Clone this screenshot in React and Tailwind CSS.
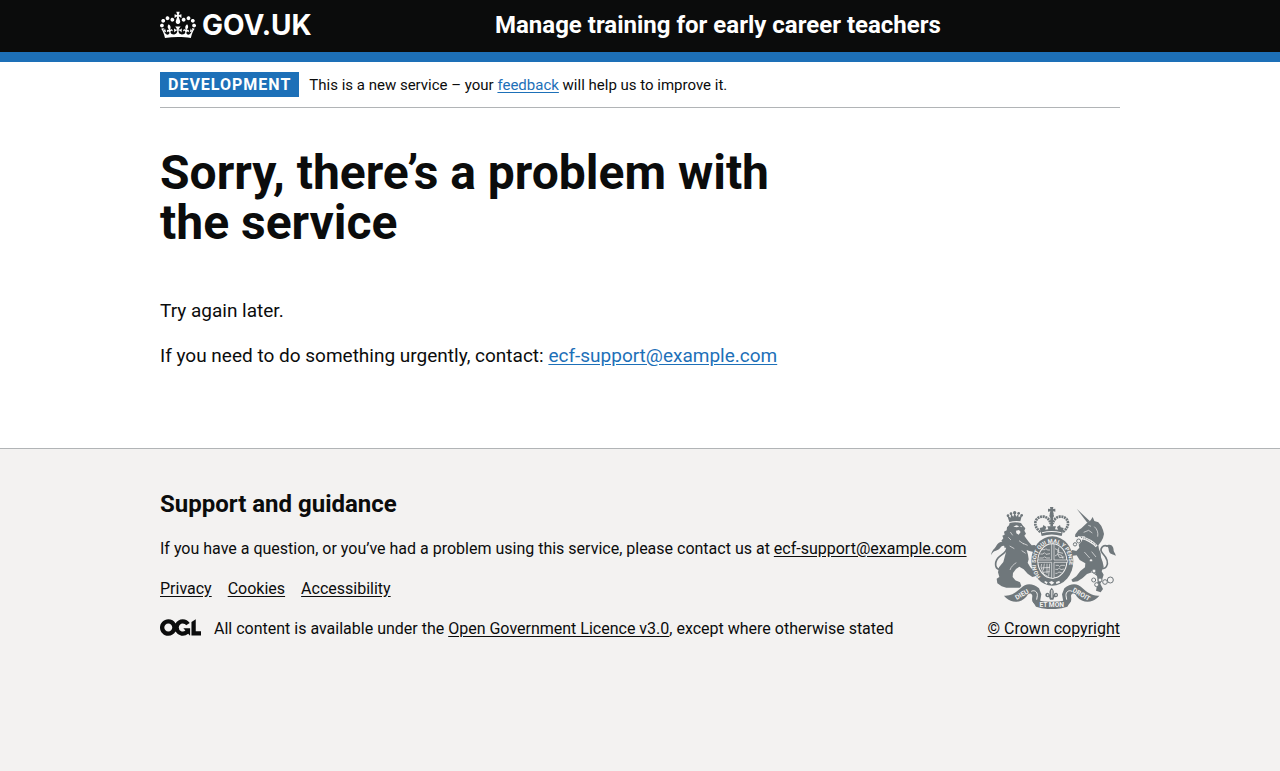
function Crown() {
  return (
    <svg aria-hidden="true" viewBox="0 0 132 97" className="h-[30px] w-9 shrink-0 fill-current">
      <path fillRule="evenodd" d="M25 30.2c3.5 1.5 7.7-.2 9.1-3.7 1.5-3.6-.2-7.8-3.9-9.2-3.6-1.4-7.6.3-9.1 3.9-1.4 3.5.3 7.5 3.9 9zM9 39.5c3.6 1.5 7.8-.2 9.2-3.7 1.5-3.6-.2-7.8-3.9-9.1-3.6-1.5-7.6.2-9.1 3.8-1.4 3.5.3 7.5 3.8 9zM4.4 57.2c3.5 1.5 7.7-.2 9.1-3.8 1.5-3.6-.2-7.7-3.9-9.1-3.5-1.5-7.6.3-9.1 3.8-1.4 3.5.3 7.6 3.9 9.1zm38.3-21.4c3.5 1.5 7.7-.2 9.1-3.8 1.5-3.6-.2-7.7-3.9-9.1-3.6-1.5-7.6.3-9.1 3.8-1.3 3.6.4 7.7 3.9 9.1zm64.4-5.6c-3.6 1.5-7.8-.2-9.1-3.7-1.5-3.6.2-7.8 3.8-9.2 3.6-1.4 7.7.3 9.2 3.9 1.3 3.5-.4 7.5-3.9 9zm15.9 9.3c-3.6 1.5-7.7-.2-9.1-3.7-1.5-3.6.2-7.8 3.7-9.1 3.6-1.5 7.7.2 9.2 3.8 1.5 3.5-.3 7.5-3.8 9zm4.7 17.7c-3.6 1.5-7.8-.2-9.2-3.8-1.5-3.6.2-7.7 3.9-9.1 3.6-1.5 7.7.3 9.2 3.8 1.3 3.5-.4 7.6-3.9 9.1zM89.3 35.8c-3.6 1.5-7.8-.2-9.2-3.8-1.4-3.6.2-7.7 3.9-9.1 3.6-1.5 7.7.3 9.2 3.8 1.4 3.6-.3 7.7-3.9 9.1zM69.7 17.7l8.9 4.7V9.3l-8.9 2.8c-.2-.3-.5-.6-.9-.9L72.4 0H59.6l3.5 11.2c-.3.3-.6.5-.9.9l-8.8-2.8v13.1l8.8-4.7c.3.3.6.7.9.9l-5 15.4v.1c-.2.8-.4 1.6-.4 2.4 0 4.1 3.1 7.5 7 8.1h.2c.3 0 .7.1 1 .1.4 0 .7 0 1-.1h.2c4-.6 7.1-4.1 7.1-8.1 0-.8-.1-1.7-.4-2.4V34l-5.1-15.4c.4-.2.7-.6 1-.9zM66 92.8c16.9 0 32.8 1.1 47.1 3.2 4-16.9 8.9-26.7 14-33.5l-9.6-3.4c1 4.9 1.1 7.2 0 10.2-1.5-1.4-3-4.3-4.2-8.7L108.6 76c2.8-2 5-3.2 7.5-3.3-4.4 9.4-10 11.9-13.6 11.2-4.3-.8-6.3-4.6-5.6-7.9 1-4.7 5.7-5.9 8-.5 4.3-8.7-3-11.4-7.6-8.8 7.1-7.2 7.9-13.5 2.1-21.1-8 6.1-8.1 12.3-4.5 20.8-4.7-5.4-12.1-2.5-9.5 6.2 3.4-5.2 7.9-2 7.2 3.1-.6 4.3-6.4 7.8-13.5 7.2-10.3-.9-10.9-8-11.2-13.8 2.5-.5 7.1 1.8 11 7.3L80.2 60c-4.1 4.4-8 5.3-12.3 5.4 1.4-4.4 8-11.6 8-11.6H55.5s6.4 7.2 7.9 11.6c-4.2-.1-8-1-12.3-5.4l1.4 16.4c3.9-5.5 8.5-7.7 10.9-7.3-.3 5.8-.9 12.8-11.1 13.8-7.2.6-12.9-2.9-13.5-7.2-.7-5 3.8-8.3 7.1-3.1 2.7-8.7-4.6-11.6-9.4-6.2 3.7-8.5 3.6-14.7-4.6-20.8-5.8 7.6-5 13.9 2.2 21.1-4.7-2.6-11.9.1-7.7 8.8 2.3-5.5 7.1-4.2 8.1.5.7 3.3-1.3 7.1-5.7 7.9-3.5.7-9-1.8-13.5-11.2 2.5.1 4.7 1.3 7.5 3.3l-4.7-15.4c-1.2 4.4-2.7 7.2-4.3 8.7-1.1-3-.9-5.3 0-10.2l-9.5 3.4c5 6.9 9.9 16.7 14 33.5 14.8-2.1 30.8-3.2 47.7-3.2z" />
    </svg>
  );
}

function OglLogo() {
  return (
    <svg role="img" aria-label="OGL" viewBox="0 0 483.2 195.7" className="h-[17px] w-[41px] shrink-0 fill-current">
      <path d="M421.5 142.8V.1l-50.7 32.3v161.1h112.4v-50.7zm-122.3-9.6A47.12 47.12 0 0 1 221 97.8c0-26 21.1-47.1 47.1-47.1 16.7 0 31.4 8.7 39.7 21.8l42.7-27.2A97.63 97.63 0 0 0 268.1 0c-36.5 0-68.3 20.1-85.1 49.7A98 98 0 0 0 97.8 0C43.9 0 0 43.9 0 97.8s43.9 97.8 97.8 97.8c36.5 0 68.3-20.1 85.1-49.7a97.76 97.76 0 0 0 149.6 25.4l19.4 22.2h3v-87.8h-80l24.3 27.5zM97.8 145c-26 0-47.1-21.1-47.1-47.1s21.1-47.1 47.1-47.1 47.1 21.1 47.1 47.1S123.8 145 97.8 145" />
    </svg>
  );
}

const INK = '#6f777b';
const PAPER = '#f3f2f1';

function RoyalArms() {
  return (
    <svg aria-hidden="true" viewBox="36 21 375 306" className="h-[102px] w-[125px]" fill={INK}>
      {/* lion's crown */}
      <path d="M91 66l-6-19 10 6 1-11 7 8 4-12 5 12 6-9 1 11 10-6-5 18q-16-3-33 2z" />
      <g>
        <circle cx="87" cy="47" r="4" /><circle cx="96" cy="41" r="4" /><circle cx="107" cy="38" r="5" /><circle cx="119" cy="40" r="4" /><circle cx="128" cy="46" r="4" />
      </g>
      {/* lion's tail */}
      <path fill="none" stroke={INK} strokeWidth="5" d="M82 136c8 14-8 24-20 33-15 12-17 36-1 39 10 2 16-4 20-9" />
      <path d="M36 166c2-17 12-20 16-29 8-13 26-18 33 2-8-5-16-3-21 4-5 8-12 7-18 11-5 3-7 7-10 12z" />
      {/* lion */}
      <path d="M92 69q16-4 34 0l6 8 7 8-3 7 5 9-5 6 5 8 8 10 9 11 9-1 8 6-2 10-10 5-12-3-8-3 4 14 2 14-3 10 8 14 10 10 9 5-1 11-12 3-14-10-12-13-13-8-10 7-9 12-1 12 8 10 14 6 4 11-5 5H82l-14-4-13-9-2-14 8-5-4-14 3-15 13-16 4-15 4-15 3-14-7 2-2-8-8 1 5-9-5-6 6-7-3-8 7-3-2-9 8-4 1-9 6-6z" />
      <path fill={PAPER} d="M103 80l9-4 9 3-7 3zM111 92l9-2 5 6-6 8-7-4zM123 79l6-1-2 4z" />
      <path fill="none" stroke={PAPER} strokeWidth="2" d="M92 138l14 8M112 188c-8 5-16 12-19 22M120 122l14 10M128 152l12 8M94 96l7 10M88 112l8 8M146 136l-14-6" />
      {/* unicorn's tail */}
      <path fill="none" stroke={INK} strokeWidth="5" d="M386 139c-14-8-26 9-16 20 12 13 21 27 12 41-4 6-12 7-18 2" />
      <path d="M380 138c18-10 24 3 24 14 1 5 6 8 6 16-7-6-18-4-20-14-2-9 0-13-10-16z" />
      {/* unicorn */}
      <path d="M293 26l39 37-7 5z" />
      <path d="M327 66l8-5 6-10 5 12 12 4 9 11 5 12 3 12-3 12-5 10-9 12 2 12 5 12 1 12 5 14 3 14-6 14 6 10-4 13-6 14 8 16-7 10-14-5 3-16 2-14-2-14-15-11-15 5-13 12-15 10-15 2-4-7 15-10 12-16 14-11 1-12-17-10-9-14-12 1-9-9 8-8 12 3 9-10-2-9 8-9 6-12 6-5-11 2-10-2-2 4-8-2 1-7 9-12 9-6z" />
      <path fill="none" stroke={PAPER} strokeWidth="8" d="M307 113c16 4 33 12 46 26" />
      <path fill="none" stroke={INK} strokeWidth="3" strokeDasharray="3 3" d="M306 112c16 4 33 12 47 26" />
      <path fill="none" stroke={PAPER} strokeWidth="2" d="M328 76l8 3M314 97l15-6 11 8M346 80c9 8 12 18 10 30M338 155l13 16M316 156l16 18M336 214l14 6" />
      {/* chain */}
      <g fill={PAPER} stroke={INK} strokeWidth="3">
        <circle cx="299" cy="123" r="6" /><circle cx="288" cy="133" r="5" /><circle cx="336" cy="181" r="5" /><circle cx="345" cy="213" r="6" /><circle cx="344" cy="240" r="6" /><circle cx="353" cy="254" r="6" /><circle cx="363" cy="240" r="6" /><circle cx="378" cy="246" r="7" /><circle cx="394" cy="240" r="9" />
      </g>
      {/* imperial crown */}
      <g fill="none" stroke={INK} strokeWidth="8" strokeDasharray="6 2">
        <path d="M184 96c-27-21-14-49 10-46 13 2 19 12 21 22M252 96c27-21 14-49-10-46-13 2-19 12-21 22" />
      </g>
      <path d="M213 21h10l-1 6 7-1v9l-7-1 2 8h-12l2-8-7 1v-9l7 1z" />
      <circle cx="218" cy="47" r="7" /><path d="M214 50h8v30h-8z" />
      <path d="M182 84l9-2 2-7 9 6-3 8 9-1-3-9h26l-3 9 9 1-3-8 9-6 2 7 9 2-6 24q-30-9-60 0z" />
      <path fill={PAPER} d="M189 97q29-8 58 0v3q-29-8-58 0z" />
      {/* garter and shield */}
      <ellipse cx="220" cy="183" rx="63" ry="74" />
      <ellipse cx="220" cy="183" rx="45" ry="53" fill={PAPER} />
      <ellipse cx="220" cy="183" rx="42" ry="50" />
      <g fill="none" stroke={PAPER} strokeWidth="2">
        <path d="M188 149h10l3-3 4 4h8M184 162h8l4-4 5 5 12-2M181 174h12l4-4 4 4h12M228 146l12 6-4 10 12 4 4 10M240 142l-4 14 16 4M228 168l8-5 6 10 14-2M230 196h8l4 4 4-4h12M229 208h8l4-4 5 5 9-2M229 220h6l4-4 9 2M188 192l-2 10 8 20 14 8M196 191l-3 20M204 191v30M212 191l-3 38M186 204l27-2M190 217l22-2" />
      </g>
      <path stroke={PAPER} strokeWidth="2" d="M218 132h7v48h41v7h-41v48h-7v-48h-42v-7h42z" />
      <path id="garter-motto" fill="none" d="M185 231A50 60 0 1 1 256 231" />
      <text fill={PAPER} fontFamily="Roboto, sans-serif" fontSize="17" fontWeight="700"><textPath href="#garter-motto">HONI SOIT QUI MAL Y PENSE</textPath></text>
      <path fill={PAPER} d="M198 243l8 4-3 5-7-5zM210 247l8-4 8 5-8 6zM231 246l10-4 2 6-11 4z" />
      {/* motto ribbon */}
      <path d="M75 287c22 2 36-10 51-23 14-16 36-15 54 1l7 18-5 28c-9 5-20 0-22-8-3-12 4-16-4-22-8-2-10 4-14 9-12 14-31 19-47 12-9-4-15-9-20-15zM361 287c-22 2-36-10-51-23-14-16-36-15-54 1l-7 18 5 28c9 5 20 0 22-8 3-12-4-16 4-22 8-2 10 4 14 9 12 14 31 19 47 12 9-4 15-9 20-15z" />
      <path d="M160 302q8-4 15-1c29 6 57 6 86 0q7-3 15 1l-11 18c-30 10-64 10-94 0z" />
      <path fill="none" stroke={PAPER} strokeWidth="3" d="M157 274c9-5 19 1 18 13l-2 12M279 274c-9-5-19 1-18 13l2 12" />
      <g fill={PAPER} fontFamily="Roboto, sans-serif" fontSize="20" fontWeight="700" textAnchor="middle">
        <text transform="translate(132 289) rotate(-30)">DIEU</text>
        <text transform="translate(304 289) rotate(30)">DROIT</text>
        <text x="218" y="321">ET MON</text>
      </g>
      {/* fleur-de-lis */}
      <path d="M218 263c9 10 7 16 4 23 6-12 15-8 15-1 0 6-6 8-11 6l-3 8h-10l-3-8c-5 2-11 0-11-6 0-7 9-11 15 1-3-7-5-13 4-23z" />
      <path fill={PAPER} d="M217 270h3v23h-3zM204 283h4v4h-4zM229 283h4v4h-4z" />
    </svg>
  );
}

const footerLink = 'underline underline-offset-2 hover:decoration-2';
const bodyLink = 'text-[#1d70b8] underline underline-offset-2 hover:decoration-2';
const container = 'mx-auto w-full max-w-[960px]';
const email = 'ecf-support@example.com';

export default function App() {
  return (
    <div className="flex min-h-screen flex-col bg-[#f3f2f1] font-['Roboto','Liberation_Sans',sans-serif] text-[#0b0c0c]">
      <header className="border-b-10 border-[#1d70b8] bg-[#0b0c0c] text-white">
        <div className={`${container} flex h-[52px] items-center pb-0.5`}>
          <div className="flex w-[335px]">
            <a href="#home" className="flex items-center gap-1.5">
              <Crown />
              <span className="font-['Inter',sans-serif] text-[28px] leading-[30px] font-bold">GOV.UK</span>
            </a>
          </div>
          <a href="#service" className="text-2xl leading-[30px] font-bold">Manage training for early career teachers</a>
        </div>
      </header>

      <div className="bg-white">
        <div className={container}>
          <div className="flex items-center gap-2.5 border-b border-[#b1b4b6] py-2.5">
            <strong className="bg-[#1d70b8] px-2 leading-[25px] tracking-[1px] text-white">DEVELOPMENT</strong>
            <p className="text-[15px] leading-5">
              This is a new service – your <a href="#feedback" className={bodyLink}>feedback</a> will help us to improve it.
            </p>
          </div>
          <main className="pt-10 pb-20">
            <h1 className="mb-[50px] max-w-[640px] text-5xl leading-[50px] font-bold">Sorry, there’s a problem with the service</h1>
            <div className="flex flex-col gap-5 text-[19px] leading-[25px]">
              <p>Try again later.</p>
              <p>If you need to do something urgently, contact: <a href={`mailto:${email}`} className={bodyLink}>{email}</a></p>
            </div>
          </main>
        </div>
      </div>

      <footer className="border-t border-[#b1b4b6] pt-10 leading-5">
        <div className={`${container} flex items-end justify-between`}>
          <div>
            <h2 className="mb-5 text-2xl leading-[30px] font-bold">Support and guidance</h2>
            <p className="mb-5">If you have a question, or you’ve had a problem using this service, please contact us at <a href={`mailto:${email}`} className={footerLink}>{email}</a></p>
            <ul className="mb-5 flex gap-4">
              <li><a href="#privacy" className={footerLink}>Privacy</a></li>
              <li><a href="#cookies" className={footerLink}>Cookies</a></li>
              <li><a href="#accessibility" className={footerLink}>Accessibility</a></li>
            </ul>
            <div className="flex items-start gap-[13px]">
              <OglLogo />
              <p>All content is available under the <a href="#licence" className={footerLink}>Open Government Licence v3.0</a>, except where otherwise stated</p>
            </div>
          </div>
          <a href="#copyright" className="flex flex-col items-center gap-2.5 underline underline-offset-2">
            <RoyalArms />
            <span>© Crown copyright</span>
          </a>
        </div>
      </footer>
    </div>
  );
}
